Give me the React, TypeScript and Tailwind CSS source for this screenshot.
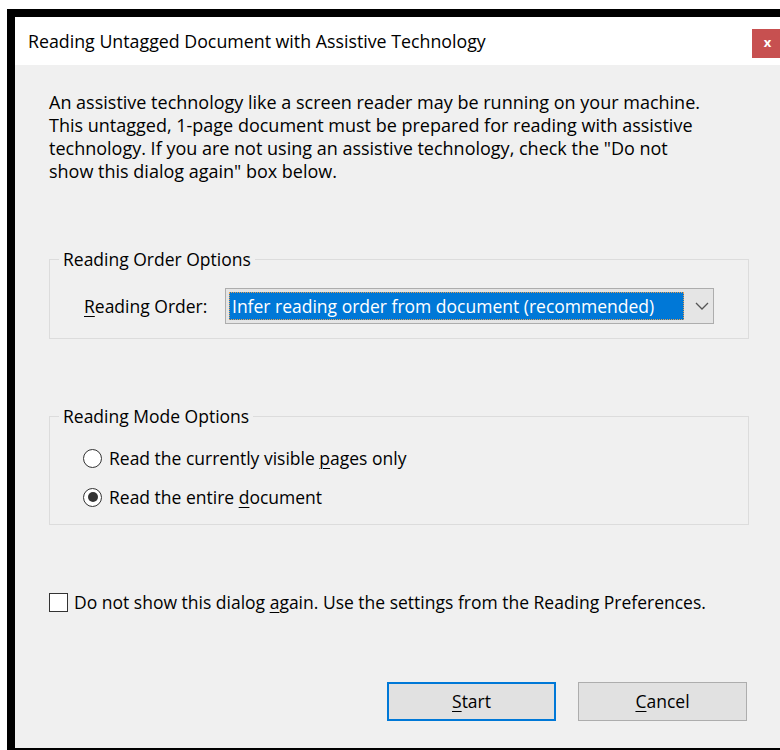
import { ReactNode } from "react";

const FONT = "font-['Open_Sans','Noto_Sans',sans-serif]";

/** Underlined access-key letter, Win32 style. */
function Key({ children }: { children: ReactNode }) {
  return <span className="underline underline-offset-[3px] decoration-1">{children}</span>;
}

/** Etched group box with the caption sitting on the top border. */
function GroupBox({ title, className, children }: { title: string; className?: string; children: ReactNode }) {
  return (
    <div className={`relative ml-[34px] w-[700px] border border-[#dcdcdc] ${className ?? ""}`}>
      <span className="absolute -top-[12px] left-[9px] px-[4px] bg-[#f0f0f0] leading-[22px]">{title}</span>
      {children}
    </div>
  );
}

function Radio({ checked, children }: { checked?: boolean; children: ReactNode }) {
  return (
    <label className="flex items-center gap-[7px] h-[24px]">
      <span className="w-[19px] h-[19px] rounded-full border border-[#333] bg-white flex items-center justify-center shrink-0">
        {checked && <span className="w-[10px] h-[10px] rounded-full bg-[#333]" />}
      </span>
      <span>{children}</span>
    </label>
  );
}

export default function App() {
  return (
    <div className={`w-[780px] h-[750px] bg-white pl-[7px] pt-[9px] overflow-hidden ${FONT} text-[17.5px] text-black`}>
      <div className="h-[741px] border-l-[8px] border-t-[8px] border-b-[2px] border-black flex flex-col">
        {/* title bar */}
        <div className="h-[48px] bg-white flex items-center justify-between shrink-0">
          <span className="pl-[13px] text-[17.8px]">Reading Untagged Document with Assistive Technology</span>
          <div className="w-[28px] h-[29px] bg-[#c75050] text-white flex items-center justify-center self-start mt-[12px] text-[13px] font-bold leading-none pb-[2px] pl-[3px]">
            x
          </div>
        </div>

        {/* dialog body */}
        <div className="flex-1 bg-[#f0f0f0] flex flex-col">
          <p className="mx-[34px] mt-[26px] text-[18px] leading-[23px]">
            An assistive technology like a screen reader may be running on your machine.
            <br />
            This untagged, 1-page document must be prepared for reading with assistive
            <br />
            technology. If you are not using an assistive technology, check the "Do not
            <br />
            show this dialog again" box below.
          </p>

          <GroupBox title="Reading Order Options" className="mt-[76px] h-[80px]">
            <div className="flex items-center mt-[28px] pl-[34px]">
              <span className="w-[141px]">
                <Key>R</Key>eading Order:
              </span>
              <div className="w-[489px] h-[36px] border border-[#adadad] bg-[#e5e5e5] flex items-center pl-[3px]">
                <div className="w-[455px] h-[28px] bg-[#0078d7] text-white outline-1 outline-dotted outline-[#e8a050] -outline-offset-1 flex items-center pl-[3px]">
                  Infer reading order from document (recommended)
                </div>
                <svg className="ml-[11px]" width="14" height="8" viewBox="0 0 14 8">
                  <path d="M1 1 L7 7 L13 1" fill="none" stroke="#555" strokeWidth="1.3" />
                </svg>
              </div>
            </div>
          </GroupBox>

          <GroupBox title="Reading Mode Options" className="mt-[77px] h-[109px]">
            <div className="flex flex-col gap-[15px] mt-[29px] pl-[33px]">
              <Radio>
                Read the currently visible <Key>p</Key>ages only
              </Radio>
              <Radio checked>
                Read the entire <Key>d</Key>ocument
              </Radio>
            </div>
          </GroupBox>

          <label className="flex items-center gap-[6px] ml-[34px] mt-[68px] h-[19px]">
            <span className="w-[19px] h-[19px] border border-[#333] bg-white shrink-0" />
            <span>
              Do not show this dialog <Key>a</Key>gain. Use the settings from the Reading Preferences.
            </span>
          </label>

          <div className="flex justify-end gap-[22px] mt-[70px] pr-[33px]">
            <button className="w-[169px] h-[39px] border-2 border-[#0078d7] bg-[#e1e1e1]">
              <Key>S</Key>tart
            </button>
            <button className="w-[169px] h-[39px] border border-[#adadad] bg-[#e1e1e1]">
              <Key>C</Key>ancel
            </button>
          </div>
        </div>
      </div>
    </div>
  );
}
